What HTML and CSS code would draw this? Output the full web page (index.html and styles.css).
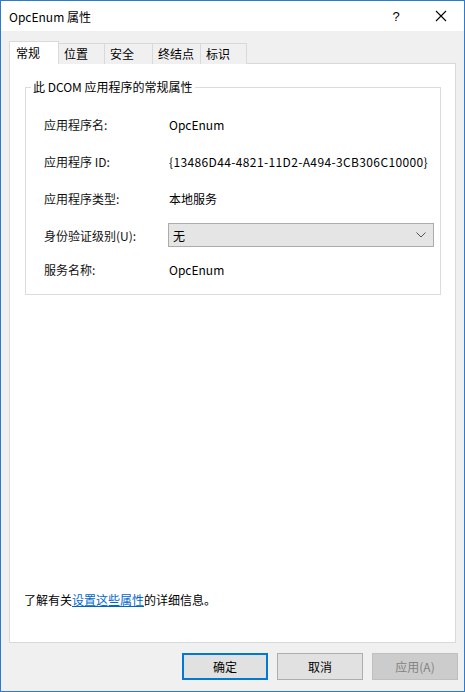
FILE: index.html
```html
<!DOCTYPE html>
<html lang="zh-CN">
<head>
<meta charset="utf-8">
<title>OpcEnum 属性</title>
<link rel="stylesheet" href="styles.css">
</head>
<body>
<div class="window">
  <div class="titlebar">
    <span class="title">OpcEnum 属性</span>
    <span class="help">?</span>
    <span class="close">
      <svg width="12" height="12" viewBox="0 0 12 12"><path d="M1 1 L11 11 M11 1 L1 11" stroke="#000" stroke-width="1.1" fill="none"/></svg>
    </span>
  </div>
  <div class="body">
    <div class="tabs">
      <div class="tab active w50">常规</div>
      <div class="tab w46">位置</div>
      <div class="tab w48">安全</div>
      <div class="tab w48">终结点</div>
      <div class="tab w46">标识</div>
    </div>
    <div class="panel">
      <fieldset class="group">
        <legend>此 DCOM 应用程序的常规属性</legend>
        <div class="row"><span class="label">应用程序名:</span><span class="value">OpcEnum</span></div>
        <div class="row"><span class="label">应用程序 ID:</span><span class="value id">{13486D44-4821-11D2-A494-3CB306C10000}</span></div>
        <div class="row"><span class="label">应用程序类型:</span><span class="value">本地服务</span></div>
        <div class="row"><span class="label">身份验证级别(U):</span>
          <div class="combo"><span>无</span>
            <svg width="10" height="6" viewBox="0 0 10 6"><path d="M0.5 0.5 L5 5 L9.5 0.5" stroke="#555" stroke-width="1" fill="none"/></svg>
          </div>
        </div>
        <div class="row last"><span class="label">服务名称:</span><span class="value">OpcEnum</span></div>
      </fieldset>
      <div class="footer">了解有关<a href="#" class="link">设置这些属性</a>的详细信息。</div>
    </div>
    <div class="buttons">
      <button class="btn default">确定</button>
      <button class="btn">取消</button>
      <button class="btn disabled">应用(A)</button>
    </div>
  </div>
</div>
</body>
</html>
```
FILE: styles.css
```css
html, body {
  margin: 0;
  padding: 0;
  background: #f0f0f0;
}
.window {
  width: 465px;
  height: 692px;
  box-sizing: border-box;
  border: 1px solid #2b7bd3;
  background: #f0f0f0;
  display: flex;
  flex-direction: column;
  font-family: "Noto Sans CJK SC", "Noto Sans", sans-serif;
  font-size: 12px;
  color: #000;
}
.titlebar {
  height: 30px;
  background: #fff;
  display: flex;
  align-items: center;
  padding-left: 8px;
}
.title {
  flex: 1;
  font-size: 12px;
}
.help {
  width: 20px;
  text-align: center;
  margin-right: 29px;
  font-family: "Liberation Sans", sans-serif;
  font-size: 13px;
}
.close {
  width: 12px;
  height: 12px;
  margin-right: 17px;
  display: flex;
}
.body {
  flex: 1;
  display: flex;
  flex-direction: column;
  padding: 10px 8px 0 8px;
}
.tabs {
  display: flex;
  align-items: flex-end;
  height: 23px;
  position: relative;
  z-index: 1;
  margin-bottom: -1px;
}
.tab {
  box-sizing: border-box;
  height: 21px;
  border: 1px solid #d9d9d9;
  border-bottom: none;
  border-left: none;
  background: #f0f0f0;
  padding-left: 5px;
  line-height: 19px;
  white-space: nowrap;
}
.tab.active {
  height: 23px;
  background: #fff;
  border-left: 1px solid #d9d9d9;
  line-height: 21px;
  padding-left: 6px;
}
.w50 { width: 50px; }
.w46 { width: 46px; }
.w48 { width: 48px; }
.panel {
  box-sizing: border-box;
  width: 447px;
  height: 580px;
  background: #fff;
  border: 1px solid #d9d9d9;
  display: flex;
  flex-direction: column;
  padding: 0 14px 0 15px;
}
.group {
  margin: 15px 0 0 0;
  padding: 17px 6px 13px 18px;
  border: 1px solid #dcdcdc;
  min-width: 0;
  display: flex;
  flex-direction: column;
  gap: 13px;
}
.group legend {
  padding: 0 2px;
  margin-left: -13px;
  line-height: 16px;
}
.row {
  height: 24px;
  display: flex;
  align-items: center;
  white-space: nowrap;
}
.row.last {
  margin-top: -3px;
}
.label {
  width: 124px;
  flex: none;
  color: #111;
}
.value {
  padding-left: 1px;
}
.value.id {
  letter-spacing: 0.37px;
}
.combo {
  box-sizing: border-box;
  flex: 1;
  height: 24px;
  background: #e5e5e5;
  border: 1px solid #acacac;
  display: flex;
  align-items: center;
  justify-content: space-between;
  padding: 0 7px 0 4px;
}
.footer {
  margin-top: auto;
  margin-bottom: 34px;
  margin-left: -1px;
  line-height: 16px;
}
.link {
  color: #0066cc;
  text-decoration: underline;
}
.buttons {
  display: flex;
  justify-content: flex-end;
  gap: 9px;
  margin-top: 10px;
  margin-right: -2px;
}
.btn {
  box-sizing: border-box;
  width: 86px;
  height: 27px;
  font-family: "Noto Sans CJK SC", "Noto Sans", sans-serif;
  font-size: 12px;
  background: #e1e1e1;
  border: 1px solid #adadad;
  color: #000;
  padding: 0;
}
.btn.default {
  border: 2px solid #0078d7;
}
.btn.disabled {
  background: #cccccc;
  border-color: #bfbfbf;
  color: #838383;
}
```
